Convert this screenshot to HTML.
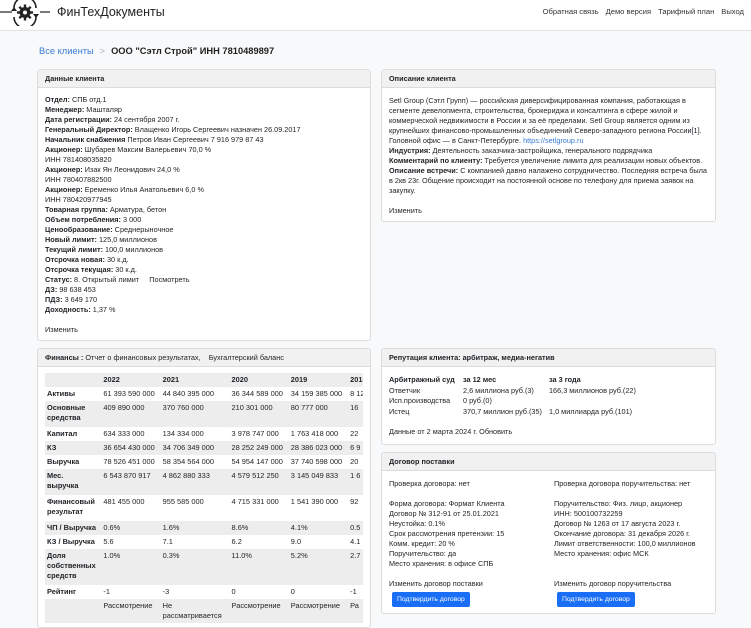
<!DOCTYPE html>
<html><head><meta charset="utf-8"><style>
*{box-sizing:border-box;margin:0;padding:0}
body{width:751px;height:621px;overflow:hidden;background:#f8f9fa;font-family:"Liberation Sans","DejaVu Sans",sans-serif;color:#212529;font-size:7.3px;line-height:10px;position:relative}
.hdr{position:absolute;left:0;top:0;width:751px;height:31px;background:#fff;border-bottom:1px solid #e3e3e3}
.logo{position:absolute;left:57px;top:5px;font-size:12.5px;line-height:14px;color:#222}
.nav{position:absolute;right:7px;top:7px;font-size:7.6px;color:#333}
.nav span{margin-left:7px}
.bc{position:absolute;left:39px;top:45px;font-size:9.3px;line-height:12px}
.bc a{color:#3a7bd5}
.bc .sep{color:#aaa;margin:0 6px}
.bc b{color:#222}
.card{position:absolute;background:#fff;border:1px solid #dcdcdc;border-radius:3px;overflow:hidden}
.ch{background:#f1f1f1;border-bottom:1px solid #dcdcdc;height:18px;padding:4px 7px;font-weight:bold;line-height:10px}
.cb{padding:8px 7px}
b{font-weight:bold}
table{border-collapse:collapse;font-size:7.4px;line-height:10px;white-space:nowrap}
td{vertical-align:top;padding:2px 2px}
tr.g td{background:#ededed}
.btn{display:inline-block;background:#1a6ef5;color:#fff;border-radius:2px;padding:3px 5px;font-size:6.8px;line-height:9px;margin:3px 0 0 3px}
</style></head><body>
<div class="hdr">
<svg style="position:absolute;left:0;top:0" width="52" height="26" viewBox="0 0 52 26">
<line x1="0" y1="12" x2="12" y2="12" stroke="#222" stroke-width="1.2"/>
<line x1="40" y1="12" x2="50" y2="12" stroke="#222" stroke-width="1.2"/>
<path d="M14 8 A11 11 0 0 1 36 8" fill="none" stroke="#222" stroke-width="1.6"/>
<path d="M14 17 A11 11 0 0 0 36 17" fill="none" stroke="#222" stroke-width="1.6"/>
<path d="M11 11 l3 -4 l3 4z M39 14 l-3 4 l-3 -4z" fill="#222"/>
<circle cx="25" cy="12.5" r="5.5" fill="#222"/>
<g stroke="#222" stroke-width="2.4"><line x1="25" y1="4.5" x2="25" y2="20.5"/><line x1="17" y1="12.5" x2="33" y2="12.5"/><line x1="19.3" y1="6.8" x2="30.7" y2="18.2"/><line x1="30.7" y1="6.8" x2="19.3" y2="18.2"/></g>
<circle cx="25" cy="12.5" r="2" fill="#fff"/>
</svg>
<div class="logo">ФинТехДокументы</div>
<div class="nav"><span>Обратная связь</span><span>Демо версия</span><span>Тарифный план</span><span>Выход</span></div>
</div>
<div class="bc"><a>Все клиенты</a><span class="sep">&gt;</span><b>ООО "Сэтл Строй" ИНН 7810489897</b></div>

<div class="card" style="left:37px;top:69px;width:334px;height:272px">
<div class="ch">Данные клиента</div>
<div class="cb" style="padding-top:7px">
<b>Отдел:</b> СПБ отд.1<br><b>Менеджер:</b> Машталяр<br><b>Дата регистрации:</b> 24 сентября 2007 г.<br><b>Генеральный Директор:</b> Влащенко Игорь Сергеевич назначен 26.09.2017<br><b>Начальник снабжения</b> Петров Иван Сергеевич 7 916 979 87 43<br><b>Акционер:</b> Шубарев Максим Валерьевич 70,0 %<br>ИНН 781408035820<br><b>Акционер:</b> Изак Ян Леонидович 24,0 %<br>ИНН 780407882500<br><b>Акционер:</b> Еременко Илья Анатольевич 6,0 %<br>ИНН 780420977945<br><b>Товарная группа:</b> Арматура, бетон<br><b>Объем потребления:</b> 3 000<br><b>Ценообразование:</b> Среднерыночное<br><b>Новый лимит:</b> 125,0 миллионов<br><b>Текущий лимит:</b> 100,0 миллионов<br><b>Отсрочка новая:</b> 30 к.д.<br><b>Отсрочка текущая:</b> 30 к.д.<br><b>Статус:</b> 8. Открытый лимит &nbsp;&nbsp;&nbsp; Посмотреть<br><b>ДЗ:</b> 98 638 453<br><b>ПДЗ:</b> 3 649 170<br><b>Доходность:</b> 1,37 %<br><div style="height:10px"></div>Изменить
</div></div>

<div class="card" style="left:381px;top:69px;width:335px;height:153px">
<div class="ch">Описание клиента</div>
<div class="cb" style="padding-right:5px">Setl Group (Сэтл Групп) — российская диверсифицированная компания, работающая в сегменте девелопмента, строительства, брокериджа и консалтинга в сфере жилой и коммерческой недвижимости в России и за её пределами. Setl Group является одним из крупнейших финансово-промышленных объединений Северо-западного региона России[1]. Головной офис — в Санкт-Петербурге. <span style="color:#3a7bd5">https://setlgroup.ru</span><br><b>Индустрия:</b> Деятельность заказчика-застройщика, генерального подрядчика<br><b>Комментарий по клиенту:</b> Требуется увеличение лимита для реализации новых объектов.<br><b>Описание встречи:</b> С компанией давно налажено сотрудничество. Последняя встреча была в 2кв 23г. Общение происходит на постоянной основе по телефону для приема заявок на закупку.<div style="height:10px"></div>Изменить</div></div>

<div class="card" style="left:37px;top:348px;width:334px;height:280px">
<div class="ch"><b>Финансы :</b> <span style="font-weight:normal">Отчет о финансовых результатах, &nbsp;&nbsp;&nbsp;Бухгалтерский баланс</span></div>
<div style="position:absolute;left:7px;top:24px;width:318px;overflow:hidden">
<table style="width:340px">
<col style="width:57px"><col style="width:60px"><col style="width:70px"><col style="width:60px"><col style="width:60px"><col>
<tr class="g"><td></td><td><b>2022</b></td><td><b>2021</b></td><td><b>2020</b></td><td><b>2019</b></td><td><b>2018</b></td></tr>
<tr><td><b>Активы</b></td><td>61 393 590 000</td><td>44 840 395 000</td><td>36 344 589 000</td><td>34 159 385 000</td><td>8 125 000</td></tr>
<tr class="g"><td style="padding-bottom:4px"><b>Основные<br>средства</b></td><td>409 890 000</td><td>370 760 000</td><td>210 301 000</td><td>80 777 000</td><td>16</td></tr>
<tr><td><b>Капитал</b></td><td>634 333 000</td><td>134 334 000</td><td>3 978 747 000</td><td>1 763 418 000</td><td>22</td></tr>
<tr class="g"><td><b>КЗ</b></td><td>36 654 430 000</td><td>34 706 349 000</td><td>28 252 249 000</td><td>28 386 023 000</td><td>6 9</td></tr>
<tr><td><b>Выручка</b></td><td>78 526 451 000</td><td>58 354 564 000</td><td>54 954 147 000</td><td>37 740 598 000</td><td>20</td></tr>
<tr class="g"><td style="padding-bottom:4px"><b>Мес.<br>выручка</b></td><td>6 543 870 917</td><td>4 862 880 333</td><td>4 579 512 250</td><td>3 145 049 833</td><td>1 6</td></tr>
<tr><td style="padding-bottom:4px"><b>Финансовый<br>результат</b></td><td>481 455 000</td><td>955 585 000</td><td>4 715 331 000</td><td>1 541 390 000</td><td>92</td></tr>
<tr class="g"><td><b>ЧП / Выручка</b></td><td>0.6%</td><td>1.6%</td><td>8.6%</td><td>4.1%</td><td>0.5</td></tr>
<tr><td><b>КЗ / Выручка</b></td><td>5.6</td><td>7.1</td><td>6.2</td><td>9.0</td><td>4.1</td></tr>
<tr class="g"><td style="padding-bottom:4px"><b>Доля<br>собственных<br>средств</b></td><td>1.0%</td><td>0.3%</td><td>11.0%</td><td>5.2%</td><td>2.7</td></tr>
<tr><td><b>Рейтинг</b></td><td>-1</td><td>-3</td><td>0</td><td>0</td><td>-1</td></tr>
<tr class="g"><td></td><td>Рассмотрение</td><td>Не<br>рассматривается</td><td>Рассмотрение</td><td>Рассмотрение</td><td>Ра</td></tr>
</table></div></div>

<div class="card" style="left:381px;top:348px;width:335px;height:97px">
<div class="ch">Репутация клиента: арбитраж, медиа-негатив</div>
<div class="cb" style="padding-top:8px">
<table style="font-size:7.3px;line-height:10.7px"><col style="width:74px"><col style="width:86px"><col>
<tr><td style="padding:0"><b>Арбитражный суд</b></td><td style="padding:0"><b>за 12 мес</b></td><td style="padding:0"><b>за 3 года</b></td></tr>
<tr><td style="padding:0">Ответчик</td><td style="padding:0">2,6 миллиона руб.(3)</td><td style="padding:0">166,3 миллионов руб.(22)</td></tr>
<tr><td style="padding:0">Исп.производства</td><td style="padding:0">0 руб.(0)</td><td style="padding:0"></td></tr>
<tr><td style="padding:0">Истец</td><td style="padding:0">370,7 миллион руб.(35)</td><td style="padding:0">1,0 миллиарда руб.(101)</td></tr>
</table><div style="height:9px"></div>Данные от 2 марта 2024 г. Обновить</div></div>

<div class="card" style="left:381px;top:452px;width:335px;height:162px">
<div class="ch">Договор поставки</div>
<div class="cb" style="position:relative;padding-top:8px">
<div style="position:absolute;left:7px;top:8px;width:160px">Проверка договора: нет<div style="height:10px"></div>Форма договора: Формат Клиента<br>Договор № 312-91 от 25.01.2021<br>Неустойка: 0.1%<br>Срок рассмотрения претензии: 15<br>Комм. кредит: 20 %<br>Поручительство: да<br>Место хранения: в офисе СПБ<div style="height:10px"></div>Изменить договор поставки<br><span class="btn">Подтвердить договор</span></div>
<div style="position:absolute;left:172px;top:8px;width:160px">Проверка договора поручительства: нет<div style="height:10px"></div>Поручительство: Физ. лицо, акционер<br>ИНН: 500100732259<br>Договор № 1263 от 17 августа 2023 г.<br>Окончание договора: 31 декабря 2026 г.<br>Лимит ответственности: 100,0 миллионов<br>Место хранения: офис МСК<br><br><div style="height:10px"></div>Изменить договор поручительства<br><span class="btn">Подтвердить договор</span></div>
</div></div>
</body></html>
